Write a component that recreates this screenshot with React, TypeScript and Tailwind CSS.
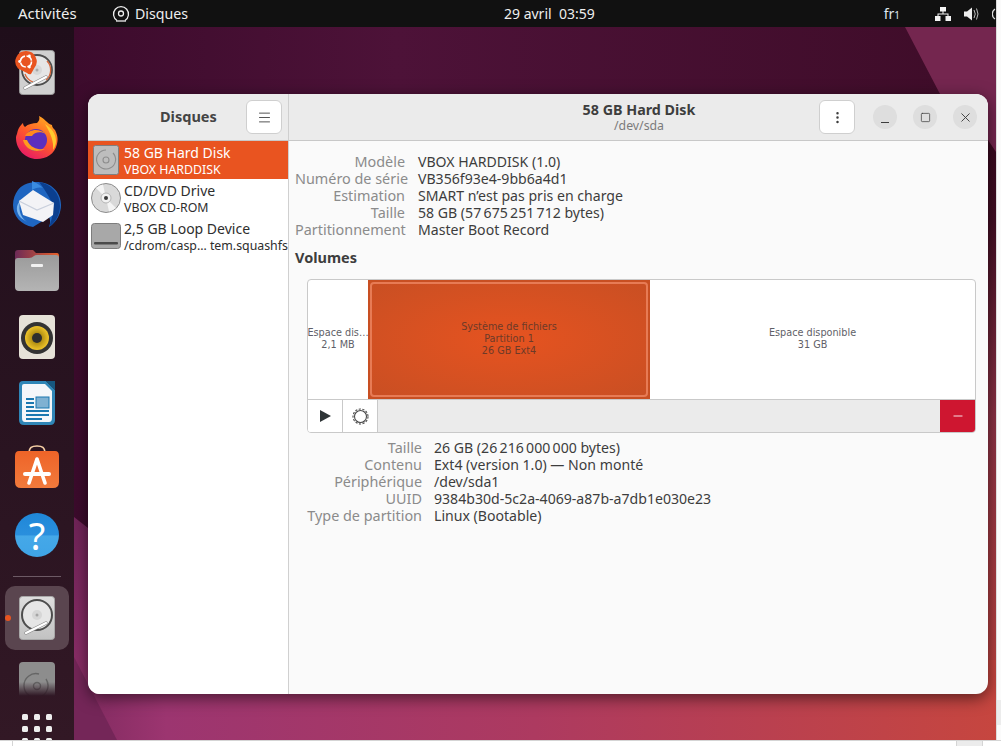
import { Menu, MoreVertical, Minus, Square, X } from 'lucide-react'

const details = [
  ['Modèle', 'VBOX HARDDISK (1.0)'],
  ['Numéro de série', 'VB356f93e4-9bb6a4d1'],
  ['Estimation', 'SMART n’est pas pris en charge'],
  ['Taille', '58 GB (57\u2009675\u2009251\u2009712 bytes)'],
  ['Partitionnement', 'Master Boot Record'],
]

const partition = [
  ['Taille', '26 GB (26\u2009216\u2009000\u2009000 bytes)'],
  ['Contenu', 'Ext4 (version 1.0) — Non monté'],
  ['Périphérique', '/dev/sda1'],
  ['UUID', '9384b30d-5c2a-4069-a87b-a7db1e030e23'],
  ['Type de partition', 'Linux (Bootable)'],
]

function Wallpaper() {
  return (
    <svg className="absolute inset-0 w-full h-full" viewBox="74 27 922 713" preserveAspectRatio="none">
      <defs>
        <linearGradient id="top" x1="74" y1="0" x2="996" y2="0" gradientUnits="userSpaceOnUse">
          <stop offset="0" stopColor="#3c0b2c" />
          <stop offset="0.35" stopColor="#4d1238" />
          <stop offset="1" stopColor="#3e0c28" />
        </linearGradient>
        <linearGradient id="bottom" x1="74" y1="0" x2="996" y2="0" gradientUnits="userSpaceOnUse">
          <stop offset="0" stopColor="#7f2a5f" />
          <stop offset="0.1" stopColor="#9c3570" />
          <stop offset="0.5" stopColor="#ad3a60" />
          <stop offset="1" stopColor="#c6463f" />
        </linearGradient>
        <linearGradient id="right" x1="0" y1="150" x2="0" y2="740" gradientUnits="userSpaceOnUse">
          <stop offset="0" stopColor="#3a0a20" />
          <stop offset="0.12" stopColor="#430e24" />
          <stop offset="0.45" stopColor="#8c3245" />
          <stop offset="1" stopColor="#c6463f" />
        </linearGradient>
        <linearGradient id="left" x1="0" y1="520" x2="0" y2="700" gradientUnits="userSpaceOnUse">
          <stop offset="0" stopColor="#702458" />
          <stop offset="1" stopColor="#8f2f69" />
        </linearGradient>
      </defs>
      <rect x="74" y="27" width="922" height="713" fill="url(#top)" />
      <rect x="960" y="130" width="36" height="610" fill="url(#right)" />
      <polygon points="905,27 996,27 996,152 988,140 940,94" fill="#74264f" />
      <rect x="74" y="660" width="922" height="80" fill="url(#bottom)" />
      <polygon points="74,517 88,528 88,740 74,740" fill="url(#left)" />
      <polygon points="74,657 117,740 74,740" fill="#742658" />
    </svg>
  )
}

function HardDisk() {
  return (
    <svg width="36" height="44" viewBox="0 0 36 44">
      <defs>
        <linearGradient id="hd" x1="0" y1="0" x2="0" y2="1">
          <stop offset="0" stopColor="#dedede" />
          <stop offset="1" stopColor="#c2c2c2" />
        </linearGradient>
      </defs>
      <rect x="0.5" y="0.5" width="35" height="43" rx="3" fill="url(#hd)" stroke="#a8a8a8" />
      <circle cx="18" cy="19" r="15" fill="#e6e6e6" stroke="#4d4d4d" strokeWidth="2" />
      <circle cx="18" cy="19" r="5" fill="#d6d6d6" />
      <circle cx="18" cy="19" r="1.5" fill="#a5a5a5" />
      <path d="M27 27 L7 37" stroke="#8a8a8a" strokeWidth="3.4" strokeLinecap="round" />
      <path d="M27 27 L7 37" stroke="#fff" strokeWidth="2.2" strokeLinecap="round" />
    </svg>
  )
}

function InstallerIcon() {
  return (
    <div className="relative w-[45px] h-[45px]">
      <svg className="absolute left-[4px] top-0" width="36" height="45" viewBox="0 0 36 45">
        <rect x="0.5" y="0.5" width="35" height="44" rx="3" fill="#d0d0d0" stroke="#9a9a9a" />
        <circle cx="18" cy="20" r="15" fill="#e6e6e6" stroke="#4d4d4d" strokeWidth="1.8" />
        <path d="M28 11 A13 13 0 0 1 27 30" fill="none" stroke="#d9673b" strokeWidth="1.3" />
        <path d="M6 24 A13 13 0 0 0 14 32" fill="none" stroke="#d9673b" strokeWidth="1.3" />
        <circle cx="18" cy="20" r="5" fill="#d8d8d8" />
        <circle cx="18" cy="20" r="1.5" fill="#aaa" />
        <path d="M27 27 L6 38" stroke="#8a8a8a" strokeWidth="3.4" strokeLinecap="round" />
        <path d="M27 27 L6 38" stroke="#fff" strokeWidth="2.2" strokeLinecap="round" />
      </svg>
      <svg className="absolute left-[-1px] top-0" width="24" height="26" viewBox="0 0 24 26">
        <path d="M12 1 a10.5 10.5 0 0 1 8 17.5 L17 24 Q15 25 13 23 L4 18.5 A10.5 10.5 0 0 1 12 1z" fill="#e95420" />
        <circle cx="12" cy="11.5" r="5.5" fill="none" stroke="#fff" strokeWidth="1.6" strokeDasharray="7 1.6" />
        <circle cx="5.6" cy="11.5" r="1.4" fill="#fff" />
        <circle cx="15.4" cy="6" r="1.4" fill="#fff" />
        <circle cx="15.4" cy="17" r="1.4" fill="#fff" />
      </svg>
    </div>
  )
}

function Firefox() {
  return (
    <svg width="44" height="44" viewBox="0 0 44 44">
      <defs>
        <linearGradient id="ff" x1="0.8" y1="0" x2="0.2" y2="1">
          <stop offset="0" stopColor="#ffb020" />
          <stop offset="0.5" stopColor="#ff5a2a" />
          <stop offset="1" stopColor="#e5146b" />
        </linearGradient>
      </defs>
      <path d="M2 18 C3 12 5 10 8 7 C8 9 9 10 10 11 C13 8 18 7 22 7 C24 5 25 3 24 0 C31 3 31 7 37 9 C37 11 38 12 40 14 C43 20 43 24 42 28 C40 38 31 43 22 43 C10 43 1 33 1 22 C1 20 1.5 19 2 18z" fill="url(#ff)" />
      <path d="M30 8 C36 12 41 17 41 25 C41 28 40 31 38 34 C39 26 36 18 30 8z" fill="#ffcb2e" />
      <circle cx="21" cy="24" r="11" fill="#5b2fbd" />
      <path d="M10 20 C14 13 24 12 31 18 C26 15 19 16 17 20 C14 20 12 20 10 20z" fill="#ff8a1e" />
      <path d="M8 24 C10 33 20 38 30 33 C24 34 16 33 12 24z" fill="#ff9a1e" />
    </svg>
  )
}

function Thunderbird() {
  return (
    <svg width="48" height="48" viewBox="0 0 48 48">
      <path d="M24 1 C38 1 48 11 48 24 C48 32 44 41 36 46 C38 41 37 38 36 36 L20 46 C8 44 0 35 0 24 C0 18 2 13 5 9 C8 5 14 1 24 1z" fill="#1f66c1" />
      <path d="M26 1 C38 3 47 12 47 25 C47 33 43 41 36 46 C40 36 42 26 36 16 C33 11 30 6 26 1z" fill="#0b3f8f" />
      <path d="M8 19 C5 25 6 36 14 41 L8 37 C3 32 2 24 8 19z" fill="#7db7ee" />
      <path d="M6 20 L20 9 L41 22 L40 34 L30 41 L10 34z" fill="#f3f3f6" />
      <path d="M6 20 L24 29 L41 22" fill="none" stroke="#c9cfdc" strokeWidth="1.2" />
      <path d="M19 0 C24 2 27 4 30 7 C26 6 22 7 19 9z" fill="#3a8be0" />
    </svg>
  )
}

function FilesIcon() {
  return (
    <svg width="44" height="41" viewBox="0 0 44 41">
      <defs>
        <linearGradient id="tab" x1="0" y1="0" x2="1" y2="0">
          <stop offset="0" stopColor="#6c2a57" />
          <stop offset="1" stopColor="#e8622b" />
        </linearGradient>
        <linearGradient id="fold" x1="0" y1="0" x2="0" y2="1">
          <stop offset="0" stopColor="#9b9b9b" />
          <stop offset="1" stopColor="#b4b4b4" />
        </linearGradient>
      </defs>
      <path d="M3 0 H18 L21 3 H42 Q44 3 44 6 V20 H0 V3 Q0 0 3 0z" fill="url(#tab)" />
      <path d="M3 8 H14 Q17 8 19 6 Q20 5 22 5 H41 Q44 5 44 8 V37 Q44 41 40 41 H4 Q0 41 0 37 V11 Q0 8 3 8z" fill="url(#fold)" />
      <rect x="16" y="14" width="12" height="3" rx="1" fill="#f1f1f1" />
    </svg>
  )
}

function Rhythmbox() {
  return (
    <svg width="36" height="44" viewBox="0 0 36 44">
      <defs>
        <radialGradient id="cone">
          <stop offset="0.4" stopColor="#b08d12" />
          <stop offset="1" stopColor="#eec42a" />
        </radialGradient>
      </defs>
      <rect width="36" height="44" rx="4" fill="#e6e2d8" />
      <circle cx="18" cy="23" r="16" fill="#333333" />
      <circle cx="18" cy="23" r="12" fill="url(#cone)" />
      <circle cx="18" cy="23" r="5" fill="#2e2e2e" />
    </svg>
  )
}

function WriterIcon() {
  return (
    <svg width="36" height="44" viewBox="0 0 36 44">
      <path d="M4 0 H27 L36 9 V39 Q36 44 31 44 H5 Q0 44 0 39 V4 Q0 0 4 0z" fill="#2f86b7" />
      <path d="M5 3 H26 L33 10 V37 Q33 41 30 41 H6 Q3 41 3 37 V5 Q3 3 5 3z" fill="#f4f7fa" />
      <path d="M27 0 H36 V9z" fill="#16577f" />
      <rect x="7" y="17" width="8" height="2" fill="#1a78b0" />
      <rect x="7" y="21" width="8" height="2" fill="#1a78b0" />
      <rect x="7" y="25" width="8" height="2" fill="#1a78b0" />
      <rect x="17" y="16" width="13" height="11" fill="#7fb1d2" stroke="#1a78b0" />
      <rect x="7" y="29" width="23" height="2" fill="#1a78b0" />
      <rect x="7" y="33" width="23" height="2" fill="#1a78b0" />
      <rect x="7" y="37" width="16" height="2" fill="#1a78b0" />
    </svg>
  )
}

function StoreIcon() {
  return (
    <svg width="44" height="43" viewBox="0 0 44 43">
      <defs>
        <linearGradient id="bag" x1="0" y1="0" x2="0" y2="1">
          <stop offset="0" stopColor="#ee6428" />
          <stop offset="1" stopColor="#f27a3c" />
        </linearGradient>
      </defs>
      <path d="M14 9 C14 2 17 1 22 1 C27 1 30 2 30 9" fill="none" stroke="#f5cfa5" strokeWidth="1.6" />
      <path d="M4 6 H40 Q44 6 44 11 V37 Q44 43 38 43 H6 Q0 43 0 37 V11 Q0 6 4 6z" fill="url(#bag)" />
      <path d="M22 14 L14 38 M22 14 L30 38" stroke="#fff" strokeWidth="3.6" strokeLinecap="round" />
      <rect x="8" y="27" width="28" height="4" rx="2" fill="#fff" />
    </svg>
  )
}

function HelpIcon() {
  return (
    <div className="w-[44px] h-[44px] rounded-full bg-[linear-gradient(#1f87d8_0%,#2a8fdd_50%,#45a8e8_52%,#3fa4e6_100%)] flex items-center justify-center text-white text-[38px] leading-none">
      ?
    </div>
  )
}

function Dock() {
  return (
    <div className="w-[74px] h-full shrink-0 flex flex-col items-center overflow-hidden relative bg-[linear-gradient(#1f0e1a,#2a1421_60%,#321825)]">
      <div className="mt-[23px]"><InstallerIcon /></div>
      <div className="mt-[21px]"><Firefox /></div>
      <div className="mt-[21px]"><Thunderbird /></div>
      <div className="mt-[21px]"><FilesIcon /></div>
      <div className="mt-[24px] h-[44px]"><Rhythmbox /></div>
      <div className="mt-[22px] h-[44px]"><WriterIcon /></div>
      <div className="mt-[20px] h-[43px]"><StoreIcon /></div>
      <div className="mt-[25px]"><HelpIcon /></div>
      <div className="mt-[19px] w-[48px] h-px shrink-0 bg-[#6d5a65]" />
      <div className="mt-[9px] w-[64px] h-[64px] shrink-0 rounded-[10px] bg-[#5a454f] flex items-center justify-center">
        <HardDisk />
      </div>
      <div className="absolute left-[5px] top-[588px] w-[6px] h-[6px] rounded-full bg-[#e95420]" />
      <div className="mt-[12px] h-[34px] shrink-0 overflow-hidden relative">
        <svg width="36" height="44" viewBox="0 0 36 44">
          <rect width="36" height="44" rx="4" fill="#8d8d8d" />
          <path d="M27 17 A12 12 0 1 1 20 12" fill="none" stroke="#656565" strokeWidth="1.4" />
          <circle cx="18" cy="24" r="3.5" fill="none" stroke="#656565" strokeWidth="1.4" />
        </svg>
        <div className="absolute inset-x-0 bottom-0 h-[14px] bg-[linear-gradient(transparent,#2e1623)]" />
      </div>
      <div className="mt-[18px] grid grid-cols-3 gap-[6px] shrink-0">
        {Array.from({ length: 9 }).map((_, i) => (
          <div key={i} className="w-[6px] h-[6px] rounded-[1.5px] bg-[#eeeeee]" />
        ))}
      </div>
    </div>
  )
}

function TopBar() {
  return (
    <div className="h-[27px] shrink-0 bg-[#111111] text-[#eeeeee] text-[14.5px] flex items-center relative">
      <span className="ml-[18px] w-[58px] text-[15px] whitespace-nowrap">Activités</span>
      <svg className="ml-[36px]" width="18" height="18" viewBox="0 0 18 18" fill="none" stroke="#eee" strokeWidth="1.3">
        <path d="M5 15.5 A7.5 7.5 0 1 1 13 15.5" />
        <circle cx="9" cy="8.5" r="2.5" />
        <path d="M4 16 H14" />
      </svg>
      <span className="ml-[5px] text-[14.2px]">Disques</span>
      <span className="absolute left-[504px] whitespace-pre text-[14px]">29 avril  03:59</span>
      <div className="ml-auto flex items-center">
        <span className="text-[14px] text-[#dfe8f0]">fr<span className="text-[10px]">1</span></span>
        <svg className="ml-[35px]" width="16" height="14" viewBox="0 0 16 14" fill="#f4f4f4">
          <rect x="5" y="0" width="6" height="4.5" />
          <rect x="0" y="9" width="5.5" height="5" />
          <rect x="10.5" y="9" width="5.5" height="5" />
          <path d="M7.5 4 h1 v2.5 h5 v3 h-1 v-2 h-9 v2 h-1 v-3 h5z" />
        </svg>
        <svg className="ml-[13px]" width="16" height="14" viewBox="0 0 16 14" fill="#eee">
          <path d="M0 4.5 H3 L8 0.5 V13.5 L3 9.5 H0z" />
          <path d="M10 3 Q12.5 7 10 11 M12.5 1.5 Q15.5 7 12.5 12.5" fill="none" stroke="#bbb" strokeWidth="1" />
        </svg>
        <svg className="ml-[12px] shrink-0" width="4" height="14" viewBox="0 0 4 14" fill="none" stroke="#ddd" strokeWidth="1.3">
          <path d="M3 2 A6 6 0 0 0 3 12" />
        </svg>
      </div>
    </div>
  )
}

function InfoRows({ rows, labelWidth }: { rows: string[][]; labelWidth: string }) {
  return (
    <div className="flex flex-col leading-[17px]">
      {rows.map(([label, value]) => (
        <div key={label} className="flex whitespace-nowrap">
          <span className={`${labelWidth} text-right text-[14.4px] text-[#8b8b8b]`}>{label}</span>
          <span className="text-[14.1px] text-[#3d3d3d]">{value}</span>
        </div>
      ))}
    </div>
  )
}

function DriveRow({ icon, title, sub, active = false }: { icon: React.ReactNode; title: string; sub: string; active?: boolean }) {
  return (
    <div className={`h-[38px] flex items-center ${active ? 'bg-[#e95420] text-white' : 'text-[#2e2e2e]'}`}>
      <div className="w-[36px] shrink-0 flex justify-center">{icon}</div>
      <div className="whitespace-nowrap">
        <div className="text-[14px] leading-[18px]">{title}</div>
        <div className="text-[12.35px] leading-[15px] whitespace-pre">{sub}</div>
      </div>
    </div>
  )
}

function PartitionMap() {
  return (
    <div className="ml-[18px] mr-[12px] mt-[13px] h-[154px] border border-[#c9c9c9] rounded-[4px] overflow-hidden flex flex-col bg-white shrink-0">
      <div className="h-[119px] flex font-['DejaVu_Sans',sans-serif] text-[9.7px] leading-[12px] text-[#5f5f68] text-center">
        <div className="w-[60px] pb-[2px] flex flex-col items-center justify-center whitespace-nowrap">
          <div>Espace dis…</div>
          <div>2,1 MB</div>
        </div>
        <div className="w-[282px] p-[2px] bg-[#c84f22]">
          <div className="h-full pb-[2px] rounded-[4px] border-[2px] border-[#e77b55] bg-[radial-gradient(ellipse_at_center,#e65320_0%,#c94f23_100%)] flex flex-col items-center justify-center text-[#6d3a28]">
            <div>Système de fichiers</div>
            <div>Partition 1</div>
            <div>26 GB Ext4</div>
          </div>
        </div>
        <div className="flex-1 pb-[2px] flex flex-col items-center justify-center">
          <div>Espace disponible</div>
          <div>31 GB</div>
        </div>
      </div>
      <div className="h-[33px] flex border-t border-[#c9c9c9] bg-[#ebebeb]">
        <div className="w-[35px] bg-white border-r border-[#c9c9c9] flex items-center justify-center">
          <svg width="11" height="12" viewBox="0 0 11 12" fill="#2e3436">
            <path d="M0 0 L11 6 L0 12z" />
          </svg>
        </div>
        <div className="w-[35px] bg-white border-r border-[#c9c9c9] flex items-center justify-center">
          <svg width="17" height="17" viewBox="0 0 17 17" fill="none" stroke="#4a4a4a">
            <circle cx="8.5" cy="8.5" r="6" strokeWidth="1.1" />
            <circle cx="8.5" cy="8.5" r="7.5" strokeWidth="1.1" strokeDasharray="2.2 1.5" />
          </svg>
        </div>
        <div className="ml-auto w-[35px] bg-[#ce1630] flex items-center justify-center">
          <Minus size={14} stroke="#fff" strokeWidth={1.5} />
        </div>
      </div>
    </div>
  )
}

function DisksWindow() {
  return (
    <div className="absolute left-[14px] top-[67px] w-[900px] h-[600px] rounded-[12px] overflow-hidden bg-[#fafafa] flex flex-col shadow-[0_4px_16px_rgba(0,0,0,0.55)]">
      <div className="h-[47px] shrink-0 flex bg-[#ebebeb] border-b border-[#c8c8c8]">
        <div className="w-[201px] shrink-0 border-r border-[#cfcfcf] flex items-center">
          <span className="ml-[72px] text-[14.5px] font-bold text-[#444444]">Disques</span>
          <div className="ml-auto mr-[6px] w-[36px] h-[34px] bg-white border border-[#cfcfcf] rounded-[6px] flex items-center justify-center">
            <Menu size={15} stroke="#2e2e2e" strokeWidth={1.3} />
          </div>
        </div>
        <div className="flex-1 flex items-center relative">
          <div className="absolute left-[150px] w-[400px] text-center">
            <div className="text-[14.3px] font-bold text-[#3d3d3d] leading-[17px]">58 GB Hard Disk</div>
            <div className="text-[12.3px] text-[#7b7b7b] leading-[15px]">/dev/sda</div>
          </div>
          <div className="ml-auto w-[36px] h-[34px] bg-white border border-[#cfcfcf] rounded-[6px] flex items-center justify-center">
            <MoreVertical size={15} stroke="#3d3d3d" strokeWidth={2} />
          </div>
          <div className="ml-[18px] mr-[11px] flex gap-[16px]">
            <div className="w-[24px] h-[24px] rounded-full bg-[#dedede] flex items-end justify-center pb-[6px]">
              <div className="w-[8px] h-px bg-[#3d3d3d]" />
            </div>
            <div className="w-[24px] h-[24px] rounded-full bg-[#dedede] flex items-center justify-center">
              <Square size={11} stroke="#3d3d3d" strokeWidth={1.6} />
            </div>
            <div className="w-[24px] h-[24px] rounded-full bg-[#dedede] flex items-center justify-center">
              <X size={15} stroke="#3d3d3d" strokeWidth={1.5} />
            </div>
          </div>
        </div>
      </div>

      <div className="flex-1 flex min-h-0">
        <div className="w-[201px] shrink-0 bg-white border-r border-[#d0d0d0]">
          <DriveRow
            active
            title="58 GB Hard Disk"
            sub="VBOX HARDDISK"
            icon={
              <svg width="26" height="30" viewBox="0 0 26 30" fill="none">
                <rect x="0.5" y="0.5" width="25" height="29" rx="2" fill="#bdbdbd" stroke="#7f7f7f" />
                <path d="M20 8 A9.5 9.5 0 1 1 13 5" stroke="#8e8e8e" strokeWidth="1.1" />
                <circle cx="13" cy="15" r="3" stroke="#8e8e8e" strokeWidth="1.1" />
              </svg>
            }
          />
          <DriveRow
            title="CD/DVD Drive"
            sub="VBOX CD-ROM"
            icon={
              <svg width="30" height="30" viewBox="0 0 30 30">
                <circle cx="15" cy="15" r="14.5" fill="#d9d9d9" stroke="#8c8c8c" />
                <path d="M15 15 L5 5 A14 14 0 0 1 12 1.5z M15 15 L25 25 A14 14 0 0 1 18 28.5z" fill="#f4f4f4" />
                <circle cx="15" cy="15" r="5" fill="#f2f2f2" stroke="#b5b5b5" />
                <circle cx="15" cy="15" r="2" fill="#3a3a3a" />
              </svg>
            }
          />
          <DriveRow
            title="2,5 GB Loop Device"
            sub="/cdrom/casp… tem.squashfs"
            icon={
              <svg width="30" height="26" viewBox="0 0 30 26">
                <rect x="0.5" y="0.5" width="29" height="25" rx="3" fill="#a8a8a8" stroke="#7d7d7d" />
                <rect x="3" y="19" width="24" height="2.5" rx="1" fill="#4a4a4a" />
              </svg>
            }
          />
        </div>

        <div className="flex-1 min-w-0 flex flex-col pt-[12px]">
          <div className="ml-[6px]">
            <InfoRows rows={details} labelWidth="w-[110px] mr-[13px]" />
          </div>
          <div className="ml-[6px] mt-[11px] text-[14.5px] leading-[17px] font-bold text-[#3d3d3d]">Volumes</div>
          <PartitionMap />
          <div className="ml-[18px] mt-[6px]">
            <InfoRows rows={partition} labelWidth="w-[115px] mr-[12px]" />
          </div>
        </div>
      </div>
    </div>
  )
}

export default function App() {
  return (
    <div className="w-[1001px] h-[746px] overflow-hidden flex flex-col bg-white [font-family:'Noto_Sans',sans-serif]">
      <div className="flex-1 min-h-0 flex">
        <div className="w-[996px] h-[740px] flex flex-col">
          <TopBar />
          <div className="flex-1 min-h-0 flex">
            <Dock />
            <div className="flex-1 relative overflow-hidden">
              <Wallpaper />
              <DisksWindow />
            </div>
          </div>
        </div>
        <div className="flex-1 flex flex-col bg-[#fbfbfb] border-l border-[#dddddd]">
          <div className="mt-[700px] h-[25px] bg-[#ececec]" />
        </div>
      </div>
      <div className="h-[6px] shrink-0 bg-white border-t border-[#d5d5d5] flex">
        <div className="w-[13px] border-r border-[#d5d5d5]" />
        <div className="ml-auto w-[27px] bg-[#ececec] border-x border-[#d5d5d5]" />
        <div className="w-[18px]" />
      </div>
    </div>
  )
}
